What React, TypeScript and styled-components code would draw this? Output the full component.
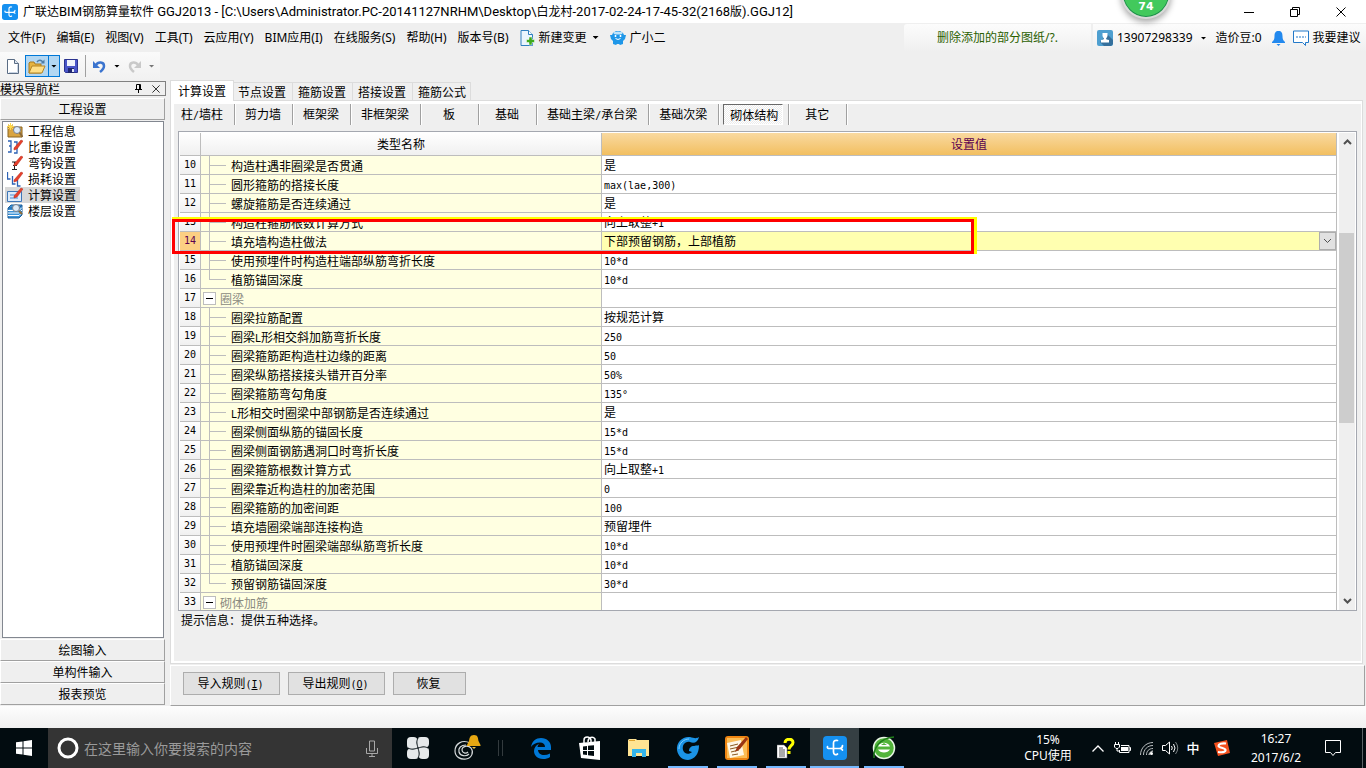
import React from "react";
import styled, { createGlobalStyle, css } from "styled-components";

const line = "#bdbdbd";
const face = "#efefef";
const edge = "#a0a0a0";

const GlobalStyle = createGlobalStyle`
  *, *::before, *::after { box-sizing: border-box; }
  body { margin: 0; background: ${face}; }
  button, input, select {
    font: inherit; color: inherit; background: none; border: 0; padding: 0; margin: 0; border-radius: 0;
  }
  svg { display: block; flex: none; }
`;

const Window = styled.div`
  display: flex;
  flex-direction: column;
  height: 100vh;
  min-height: 480px;
  overflow: hidden;
  background: ${face};
  color: #000;
  font: 12px/16px "Noto Sans", "Noto Sans CJK SC", sans-serif;
  white-space: nowrap;
`;

/* Title bar */
const TitleBar = styled.header`
  position: relative;
  display: flex;
  align-items: center;
  height: 23px;
  padding: 0 2px;
  background: #fff;
`;
const Title = styled.h1`
  flex: 1;
  margin: 0 0 0 5px;
  font-size: 12px;
  font-weight: 400;
`;
const TitleLatin = styled.span`
  font: 13px/16px Roboto, sans-serif;
`;
const CaptionButton = styled.button`
  display: flex;
  align-items: center;
  justify-content: center;
  width: 46px;
  height: 22px;
`;
const ScoreBall = styled.div`
  position: absolute;
  right: 195px;
  top: -31px;
  z-index: 2;
  display: flex;
  align-items: flex-end;
  justify-content: center;
  width: 50px;
  height: 50px;
  padding-bottom: 2px;
  border: 2px solid #d9d9d9;
  border-radius: 50%;
  box-shadow: inset 0 0 0 1px #1e8a4c, 0 3px 6px rgba(0, 0, 0, 0.35);
  background: #42c95c;
  color: #fff;
  font: bold 11px/16px "DejaVu Sans", sans-serif;
`;

/* Menu bar */
const MenuBar = styled.nav`
  display: flex;
  align-items: stretch;
  height: 29px;
  padding-left: 8px;
`;
const MenuItem = styled.button`
  display: flex;
  align-items: center;
  gap: 4px;
  margin-right: 11px;
`;
const Notice = styled.a`
  display: flex;
  align-items: center;
  justify-content: center;
  width: 187px;
  margin: 1px 2px 0 auto;
  border-radius: 3px 0 0 0;
  background: linear-gradient(#fcfcfc, ${face});
  color: #2a6000;
  text-decoration: none;
`;
const Account = styled.div`
  display: flex;
  align-items: center;
  width: 273px;
  margin-top: 1px;
  padding-left: 4px;
  background: linear-gradient(#fcfcfc, ${face});
`;
const AccountButton = styled.button<{ $after: number }>`
  display: flex;
  align-items: center;
  gap: 4px;
  margin-right: ${(p) => p.$after}px;
`;
const Caret = styled.i<{ $dim?: boolean; $before?: number }>`
  width: 6px;
  height: 3px;
  margin-left: ${(p) => p.$before ?? 0}px;
  background: ${(p) => (p.$dim ? "#777" : "#000")};
  clip-path: polygon(0 0, 100% 0, 50% 100%);
`;

/* Toolbar */
const ToolBar = styled.div`
  display: flex;
  align-items: center;
  align-self: flex-start;
  width: 160px;
  height: 28px;
  padding-left: 6px;
  background: linear-gradient(#fafafa, #f1f1f1);
`;
const ToolButton = styled.button<{ $w: number }>`
  display: flex;
  align-items: center;
  justify-content: center;
  width: ${(p) => p.$w}px;
  height: 22px;
`;
const OpenSplit = styled.div`
  display: flex;
  margin: 0 3px 0 5px;
  border: 1px solid #0078d7;
  background: #b3d7f2;
  ${ToolButton} { height: 20px; }
  ${ToolButton} + ${ToolButton} { border-left: 1px solid #0078d7; }
`;
const ToolDivider = styled.i`
  width: 1px;
  height: 22px;
  margin: 0 5px 0 6px;
  background: ${edge};
`;

/* Body */
const Body = styled.div`
  display: flex;
  flex: 1;
  min-height: 0;
  font: 12px/16px "Noto Sans CJK SC", sans-serif;
`;
const Sidebar = styled.aside`
  display: flex;
  flex-direction: column;
  width: 166px;
  margin-right: 4px;
  padding: 1px 0;
`;
const SideHeader = styled.div`
  display: flex;
  align-items: center;
  height: 15px;
  margin-bottom: 2px;
  border: 1px solid #808080;
  border-left: 0;
`;
const SideTitle = styled.h2`
  flex: 1;
  margin: 0;
  font-size: 12px;
  font-weight: 400;
  line-height: 13px;
`;
const SideIcon = styled.button`
  display: flex;
  justify-content: center;
  width: 18px;
`;
const SideButton = styled.button`
  height: 22px;
  margin-right: 1px;
  border: solid;
  border-width: 1px;
  border-color: #fff ${edge} ${edge} #fff;
  text-align: center;
  line-height: 18px;
`;
const SideList = styled.ul`
  flex: 1;
  margin: 1px 2px 1px 2px;
  padding: 1px 2px;
  border: 1px solid #828790;
  background: #fff;
  list-style: none;
`;
const SideItem = styled.button<{ $on?: boolean }>`
  display: flex;
  align-items: center;
  gap: 5px;
  height: 16px;
  padding: 0 4px 0 2px;
  background: ${(p) => (p.$on ? "#d8d8d8" : "none")};
`;

const Main = styled.main`
  display: flex;
  flex: 1;
  flex-direction: column;
  min-width: 0;
  padding-right: 1px;
`;
const Tabs = styled.div`
  display: flex;
  align-items: flex-end;
  height: 20px;
`;
const Tab = styled.button<{ $on?: boolean }>`
  height: 18px;
  padding: 1px 6px 0 5px;
  border: 1px solid #dcdcdc;
  border-width: 1px 1px 0 0;
  &:last-child { padding-right: 4px; }
  ${(p) =>
    p.$on &&
    css`
      z-index: 1;
      height: 21px;
      margin: 0 -1px -1px 0;
      padding: 0 7px 1px;
      border-left-width: 1px;
      background: #fff;
    `}
`;
const Pane = styled.section`
  display: flex;
  flex: 1;
  flex-direction: column;
  min-height: 0;
  margin-right: 2px;
  border: 1px solid #dcdcdc;
  background: #fff;
  padding: 3px 1px 2px 3px;
`;
const PaneInner = styled.div`
  display: flex;
  flex: 1;
  flex-direction: column;
  min-height: 0;
  background: ${face};
`;
const Kinds = styled.div`
  display: flex;
  height: 21px;
  margin-bottom: 6px;
`;
const KindSlot = styled.div`
  display: flex;
  justify-content: center;
  min-width: 58px;
  padding: 0 11px 0 10px;
  border-right: 1px solid ${edge};
  box-shadow: 1px 0 #fff;
  &:first-child { padding-left: 7px; }
`;
const Kind = styled.button<{ $on?: boolean }>`
  padding-bottom: 2px;
  line-height: 19px;
  ${(p) =>
    p.$on &&
    css`
      margin: 0 -6px;
      padding: 0 4px 0 6px;
      border: 1px solid;
      border-color: #696969 #fff #fff #696969;
      background: repeating-conic-gradient(#fff 0 25%, #ececec 0 50%) 0 0 / 2px 2px;
    `}
`;

/* Grid */
const GridArea = styled.div`
  position: relative;
  display: flex;
  flex: 1;
  min-height: 0;
  margin: 0 4px;
`;
const GridFrame = styled.div`
  display: flex;
  flex: 1;
  gap: 2px;
  padding: 1px 1px 0 1px;
  overflow: hidden;
  border: 1px solid #a5a8b0;
  background: #fff;
`;
const GridClip = styled.div`
  flex: 1;
  overflow: hidden;
`;
const Grid = styled.table`
  width: 100%;
  table-layout: fixed;
  border-collapse: separate;
  border-spacing: 0;
`;
const NumCol = styled.col`width: 21px;`;
const NameCol = styled.col`width: 401px;`;
const HeadCell = styled.th<{ $on?: boolean }>`
  height: 23px;
  padding: 0;
  border: solid ${line};
  border-width: 0 1px 1px 0;
  background: ${(p) => (p.$on ? "linear-gradient(#f9d9a0, #f2bf60)" : "linear-gradient(#fff, #f0f0f0)")};
  color: ${(p) => (p.$on ? "#5a0050" : "#000")};
  font-weight: 400;
`;
const Cell = styled.td<{ $tone?: "name" | "active" }>`
  height: 19px;
  padding: 0 0 0 2px;
  border: solid ${line};
  border-width: 0 1px 1px 0;
  background: ${(p) => (p.$tone === "name" ? "#ffffe1" : p.$tone === "active" ? "#ffffb0" : "#fff")};
  line-height: 16px;
`;
const NumCell = styled.th<{ $on?: boolean }>`
  height: 19px;
  padding: 0;
  border: solid ${line};
  border-width: 0 1px 1px 0;
  background: ${(p) => (p.$on ? "#fccf83" : "linear-gradient(#fff, #f0f0f0)")};
  color: ${(p) => (p.$on ? "#5a0050" : "#000")};
  font: 10px/16px "DejaVu Sans Mono", monospace;
`;
const Latin = styled.span`
  font: 10px/10px "DejaVu Sans Mono", monospace;
`;
const NameLine = styled.div<{ $group?: boolean }>`
  display: flex;
  align-items: center;
  height: 18px;
  color: ${(p) => (p.$group ? "#8a8a80" : "#000")};
`;
const NameText = styled.span`
  padding-top: 2px;
`;
const Branch = styled.i<{ $last?: boolean }>`
  position: relative;
  width: 17px;
  height: 19px;
  margin: 0 5px -1px 6px;
  &::before {
    content: "";
    position: absolute;
    left: 0;
    top: 0;
    width: 1px;
    height: ${(p) => (p.$last ? 10 : 19)}px;
    background: ${line};
  }
  &::after {
    content: "";
    position: absolute;
    left: 0;
    top: 9px;
    width: 17px;
    height: 1px;
    background: ${line};
  }
`;
const Fold = styled.button`
  display: flex;
  align-items: center;
  justify-content: center;
  width: 13px;
  height: 13px;
  margin-right: 4px;
  border: 1px solid ${line};
  background: #fff;
  color: #000;
`;
const PickCell = styled.div`
  display: flex;
  align-items: center;
  height: 18px;
`;
const Pick = styled.select`
  flex: 1;
  height: 16px;
  appearance: none;
  line-height: 16px;
`;
const PickArrow = styled.span`
  display: flex;
  align-items: center;
  justify-content: center;
  width: 17px;
  height: 18px;
  border: 1px solid #adadad;
  background: #e1e1e1;
`;
const Scroll = styled.div`
  display: flex;
  flex-direction: column;
  width: 16px;
  background: ${face};
`;
const ScrollButton = styled.button`
  display: flex;
  align-items: center;
  justify-content: center;
  height: 18px;
`;
const Track = styled.div<{ $share: number; $thumb?: boolean }>`
  flex: ${(p) => p.$share};
  margin-right: 1px;
  background: ${(p) => (p.$thumb ? "#cdcdcd" : "none")};
`;
const Marker = styled.div`
  position: absolute;
  left: -6px;
  top: 86px;
  width: 805px;
  height: 37px;
  border: solid #ff0;
  border-width: 2px 3px 0 0;
  pointer-events: none;
  &::before {
    content: "";
    display: block;
    height: 100%;
    border: 3px solid #f00;
  }
`;
const Hint = styled.p`
  height: 50px;
  margin: 0;
  padding: 1px 7px;
`;
const Actions = styled.div`
  display: flex;
  gap: 8px;
  margin-top: 1px;
  height: 41px;
  padding: 6px 12px;
  border: solid;
  border-width: 1px;
  border-color: #fff ${edge} ${edge} #fff;
`;
const ActionButton = styled.button<{ $w: number }>`
  width: ${(p) => p.$w}px;
  height: 23px;
  padding: 0 2px 2px 0;
  border: 1px solid #adadad;
  background: #e1e1e1;
  line-height: 19px;
`;
const StatusBar = styled.div`
  height: 22px;
  background: linear-gradient(#fdfdfd, #f0f0f0);
`;

/* Taskbar */
const TaskBar = styled.footer`
  display: flex;
  height: 40px;
  background: #020c10;
  color: #fff;
`;
const StartButton = styled.button`
  display: flex;
  align-items: center;
  justify-content: center;
  width: 48px;
`;
const Search = styled.label`
  display: flex;
  align-items: center;
  width: 344px;
  margin-right: 1px;
  padding: 0 13px 0 9px;
  background: #343434;
  input {
    flex: 1;
    margin-left: 5px;
    outline: 0;
    font: 14px/20px "Noto Sans CJK SC", sans-serif;
  }
  input::placeholder { color: #9a9a9a; opacity: 1; }
`;
const TaskItem = styled.button<{ $state?: "open" | "active" }>`
  display: flex;
  align-items: center;
  justify-content: center;
  width: 49px;
  ${(p) =>
    p.$state &&
    css`
      background: linear-gradient(#76b9ff, #76b9ff) center bottom / ${p.$state === "active" ? "49px" : "40px"} 2px
        no-repeat ${p.$state === "active" ? "#353f43" : "transparent"};
    `}
`;
const TaskGap = styled.i`
  width: 5px;
  height: 16px;
  margin: 12px 13px 0 7px;
  border: solid #333b3e;
  border-width: 0 1px;
`;
const Meter = styled.div`
  width: 68px;
  margin: 4px 4px 0 auto;
  text-align: center;
  line-height: 16px;
`;
const TrayButton = styled.button<{ $w: number }>`
  display: flex;
  align-items: center;
  justify-content: center;
  width: ${(p) => p.$w}px;
  font: 500 13px/16px "Noto Sans CJK SC", sans-serif;
`;
const Clock = styled.time`
  width: 72px;
  padding-top: 1px;
  text-align: center;
  line-height: 19px;
`;
const PeekLine = styled.i`
  width: 4px;
  margin-left: 8px;
  border-left: 1px solid #5a6265;
`;

/* Drawings */
const Whirl = ({ s }: { s: number }) => (
  <svg width={s} height={s} viewBox="0 0 24 24">
    <rect width="24" height="24" rx="4" fill="#1590f0" />
    <path
      d="M14.500 4.500c-2.500-.5-4 .5-4 2.500v9c0 2.500 2 3.500 4 2M4.500 10.500c-.5 1.500.5 2 2 2h10c2 0 3-1 3-3M16.500 12.500c1.500 0 2.500.5 3 1.500"
      fill="none" stroke="#fff" strokeWidth="1.700" strokeLinecap="round"
    />
  </svg>
);
const NewIcon = () => (
  <svg width="12" height="15" viewBox="0 0 12 15">
    <path d="M.5.5h7l4 4v10H.5z" fill="#fff" stroke="#5a6c84" />
    <path d="M7.500.5v4h4" fill="#dce6f2" stroke="#5a6c84" />
    <path d="M10.500 5.500v8H2" fill="none" stroke="#c7d3e3" />
  </svg>
);
const OpenIcon = () => (
  <svg width="18" height="15" viewBox="0 0 18 15">
    <path d="M1 14V4l1-1h4l1 2h6v9z" fill="#e6b440" stroke="#a87a20" />
    <path d="M1 14l3-7h13l-3 7z" fill="#ffdf86" stroke="#b58525" />
    <path d="M9 3c2-2.500 4-2 6 0" fill="none" stroke="#4f7fa8" strokeWidth="1.500" />
    <path d="M16.500.5v4h-4z" fill="#4f7fa8" />
  </svg>
);
const SaveIcon = () => (
  <svg width="14" height="14" viewBox="0 0 14 14">
    <path d="M.5.5h13v13h-12l-1-1z" fill="#4a55c8" stroke="#2b338f" />
    <path d="M3 1h8v6H3z" fill="#f0f3fb" />
    <path d="M4 9h6v5H4z" fill="#1f2670" />
    <path d="M8 10h2v3H8z" fill="#dfe4f5" />
  </svg>
);
const UndoIcon = ({ color, flip }: { color: string; flip?: boolean }) => (
  <svg width="13" height="13" viewBox="0 0 13 13">
    <g transform={flip ? "translate(13 0) scale(-1 1)" : undefined}>
      <path d="M0 1v7h7z" fill={color} />
      <path d="M3 5c2-3.500 8-3.500 8 1 0 2.500-1.500 4-4 6" fill="none" stroke={color} strokeWidth="2.500" />
    </g>
  </svg>
);
const ChangeIcon = () => (
  <svg width="15" height="16" viewBox="0 0 15 16">
    <path d="M1 .5h7.500l4 4v11H1z" fill="#e9f4fd" stroke="#2f7fc0" />
    <path d="M8.500.5v4h4" fill="#fff" stroke="#2f7fc0" />
    <path d="M9 7h3v2.500h2.500v3H12V15H9v-2.500H6.500v-3H9z" fill="#3faa1c" stroke="#fff" strokeWidth=".5" />
  </svg>
);
const RobotIcon = () => (
  <svg width="16" height="15" viewBox="0 0 16 15">
    <path d="M0 5l2 0 1-2 3-2h4l3 2 1 2 2 0-1 4-2 2v3l-3 1-1-1H7l-1 1-3-1v-3L1 9z" fill="#1f97e8" />
    <ellipse cx="8" cy="3" rx="4.500" ry="1.500" fill="#bfe4fb" />
    <path d="M5.500 5v2M10.500 5v2" stroke="#fff" strokeWidth="1.500" />
    <path d="M5.500 8.500q2.500 2 5 0" stroke="#fff" fill="none" />
  </svg>
);
const UserIcon = () => (
  <svg width="16" height="16" viewBox="0 0 16 16">
    <rect width="16" height="16" rx="2" fill="#4e9fd0" />
    <path d="M10 4l6 6v4l-2 2H7l-4-4z" fill="#35709c" />
    <path d="M5.500 3h5v3l-1 2h-3l-1-2zM7 8h2l.5 1.500L12 10v2.500H4V10l2.500-.5z" fill="#fff" />
  </svg>
);
const BellIcon = () => (
  <svg width="13" height="15" viewBox="0 0 13 15">
    <path d="M6.500 0c3 0 4 2 4 5s.5 4 2.500 6v1H0v-1c2-2 2.500-3 2.500-6s1-5 4-5z" fill="#2389ee" />
    <path d="M4.500 13h4l-2 2z" fill="#2389ee" />
  </svg>
);
const ChatIcon = () => (
  <svg width="16" height="16" viewBox="0 0 16 16">
    <path d="M.5 1h15v11.500h-3v3l-3-3h-9z" fill="#fff" stroke="#2379c9" />
    <path d="M3 7h2M6 7h2M9 7h2M12 7h1" stroke="#2379c9" />
  </svg>
);
const PinIcon = () => (
  <svg width="9" height="9" viewBox="0 0 9 9">
    <path d="M2.500 5V.5h4V5M1 5.500h7M4.500 5.500V9M5.500 1v4" fill="none" stroke="#000" />
  </svg>
);
const Cross = ({ s }: { s: number }) => (
  <svg width={s} height={s} viewBox="0 0 10 10">
    <path d="M.5.5l9 9M9.500.5l-9 9" stroke="#000" fill="none" />
  </svg>
);
const Chevron = ({ up, color = "#505050", w = 2 }: { up?: boolean; color?: string; w?: number }) => (
  <svg width="9" height="6" viewBox="0 0 9 6">
    <path d={up ? "M1 5l3.500-3.500L8 5" : "M1 1l3.500 3.500L8 1"} fill="none" stroke={color} strokeWidth={w} />
  </svg>
);
const Pen = () => <path d="M7 9l7-8 2 1-6 8-3 1z" fill="#e8402c" stroke="#b02818" strokeWidth=".5" />;
const Magnifier = () => (
  <>
    <circle cx="10" cy="7" r="3.500" fill="#dceaf8" stroke="#7a7f8a" />
    <path d="M12.500 9.500L15.500 14" stroke="#8a6a3a" strokeWidth="2" />
  </>
);
const sideArt: Record<string, React.ReactNode> = {
  info: (
    <>
      <path d="M1 3h5l1 1h8v10H1z" fill="#d9a441" stroke="#8a6420" />
      <path d="M3.500 0v7M0 3.500h7M1 1l5 5M6 1L1 6" stroke="#ffd84a" />
      <Magnifier />
    </>
  ),
  weight: (
    <>
      <path d="M1 2h3v11H1M7 3h3v11H7M4 7H2" fill="none" stroke="#2d62b5" strokeWidth="1.300" />
      <Pen />
    </>
  ),
  hook: (
    <>
      <path d="M5 7h4M7.500 7v7M5 14.500h5M6 10.500h4" stroke="#222" fill="none" />
      <Pen />
    </>
  ),
  loss: (
    <>
      <path d="M.5 1v7h3M5.500 5v8h3M10.500 9v6h3" stroke="#2d62b5" fill="none" strokeWidth="1.300" />
      <Pen />
    </>
  ),
  calc: (
    <>
      <path d="M.5 4.500h14v10H.5z" fill="#dcebfb" stroke="#3e77b8" />
      <path d="M3 8h5M3 11h8" stroke="#4f8ad0" />
      <Pen />
    </>
  ),
  floor: (
    <>
      <path d="M1 5l3-3h11l-3 3zM1 5v10h11l3-3V2l-3 3" fill="#3b92d8" stroke="#1e609c" />
      <path d="M1 7.500h11l3-3M1 10h11l3-3M1 12.500h11l3-3" fill="none" stroke="#fff" />
      <circle cx="9" cy="5" r="3.500" fill="#dceaf8" stroke="#7a7f8a" />
      <path d="M12 8l3 3" stroke="#8a6a3a" strokeWidth="2" />
    </>
  ),
};

const split = (text: string, Wrap: React.ElementType) =>
  text.split(/([\x21-\x7e°]+(?: [\x21-\x7e]+)*)/).map((part, i) => (i % 2 ? <Wrap key={i}>{part}</Wrap> : part));
const mixed = (text: string) => split(text, Latin);

const titleText =
  "广联达BIM钢筋算量软件 GGJ2013 - [C:\\Users\\Administrator.PC-20141127NRHM\\Desktop\\白龙村-2017-02-24-17-45-32(2168版).GGJ12]";
const menus = ["文件(F)", "编辑(E)", "视图(V)", "工具(T)", "云应用(Y)", "BIM应用(I)", "在线服务(S)", "帮助(H)", "版本号(B)"];
const sideItems: [string, string][] = [
  ["info", "工程信息"],
  ["weight", "比重设置"],
  ["hook", "弯钩设置"],
  ["loss", "损耗设置"],
  ["calc", "计算设置"],
  ["floor", "楼层设置"],
];
const tabs = ["计算设置", "节点设置", "箍筋设置", "搭接设置", "箍筋公式"];
const kinds = ["柱/墙柱", "剪力墙", "框架梁", "非框架梁", "板", "基础", "基础主梁/承台梁", "基础次梁", "砌体结构", "其它"];

type Row = { n: number; name: string; value?: string; kind?: "group" | "last" };
const rows: Row[] = [
  { n: 10, name: "构造柱遇非圈梁是否贯通", value: "是" },
  { n: 11, name: "圆形箍筋的搭接长度", value: "max(lae,300)" },
  { n: 12, name: "螺旋箍筋是否连续通过", value: "是" },
  { n: 13, name: "构造柱箍筋根数计算方式", value: "向上取整+1" },
  { n: 14, name: "填充墙构造柱做法", value: "下部预留钢筋，上部植筋" },
  { n: 15, name: "使用预埋件时构造柱端部纵筋弯折长度", value: "10*d" },
  { n: 16, name: "植筋锚固深度", value: "10*d", kind: "last" },
  { n: 17, name: "圈梁", kind: "group" },
  { n: 18, name: "圈梁拉筋配置", value: "按规范计算" },
  { n: 19, name: "圈梁L形相交斜加筋弯折长度", value: "250" },
  { n: 20, name: "圈梁箍筋距构造柱边缘的距离", value: "50" },
  { n: 21, name: "圈梁纵筋搭接接头错开百分率", value: "50%" },
  { n: 22, name: "圈梁箍筋弯勾角度", value: "135°" },
  { n: 23, name: "L形相交时圈梁中部钢筋是否连续通过", value: "是" },
  { n: 24, name: "圈梁侧面纵筋的锚固长度", value: "15*d" },
  { n: 25, name: "圈梁侧面钢筋遇洞口时弯折长度", value: "15*d" },
  { n: 26, name: "圈梁箍筋根数计算方式", value: "向上取整+1" },
  { n: 27, name: "圈梁靠近构造柱的加密范围", value: "0" },
  { n: 28, name: "圈梁箍筋的加密间距", value: "100" },
  { n: 29, name: "填充墙圈梁端部连接构造", value: "预留埋件" },
  { n: 30, name: "使用预埋件时圈梁端部纵筋弯折长度", value: "10*d" },
  { n: 31, name: "植筋锚固深度", value: "10*d" },
  { n: 32, name: "预留钢筋锚固深度", value: "30*d", kind: "last" },
  { n: 33, name: "砌体加筋", kind: "group" },
];

const GridRow = ({ row }: { row: Row }) => {
  const active = row.n === 14;
  const group = row.kind === "group";
  return (
    <tr>
      <NumCell scope="row" $on={active}>{row.n}</NumCell>
      <Cell $tone="name">
        <NameLine $group={group}>
          {group ? (
            <Fold aria-label="折叠">
              <svg width="7" height="1"><path d="M0 .5h7" stroke="#000" /></svg>
            </Fold>
          ) : (
            <Branch $last={row.kind === "last"} />
          )}
          <NameText>{mixed(row.name)}</NameText>
        </NameLine>
      </Cell>
      <Cell $tone={active ? "active" : undefined}>
        {active ? (
          <PickCell>
            <Pick aria-label={row.name}>
              <option>{row.value}</option>
            </Pick>
            <PickArrow><Chevron w={1} /></PickArrow>
          </PickCell>
        ) : (
          mixed(row.value ?? "")
        )}
      </Cell>
    </tr>
  );
};

const taskIcons: { label: string; state?: "open" | "active"; art: React.ReactNode }[] = [
  {
    label: "Edge",
    art: (
      <svg width="20" height="21" viewBox="0 0 20 21">
        <path d="M0 9C1 3 5 0 10 0c6 0 10 4 10 9v3H7c0 3 3 5 6 5 2 0 4-.5 6-1.500V19c-2 1.500-4 2-7 2-6 0-9-4-9-8 0-3 2-6 5-7-1 1-1.500 2-1.500 3H14c0-3-2-4.500-5-4.500C5 4.500 2 6 0 9z" fill="#0078d7" />
      </svg>
    ),
  },
  {
    label: "商店",
    art: (
      <svg width="22" height="24" viewBox="0 0 22 24">
        <path d="M5 7V4c0-4 6-4 7 0v2M9 6c0-5 5-6 7-3v3" fill="none" stroke="#fff" strokeWidth="1.500" />
        <path d="M0 7l21-2v19L2 22z" fill="#fff" />
        <path d="M4 10.500l4-.5v4H4zM9 9.800l6-.6V14H9zM4 15h4v4l-4-.5zM9 15h6v5l-6-.7z" fill="#020c10" />
      </svg>
    ),
  },
  {
    label: "文件资源管理器",
    art: (
      <svg width="22" height="18" viewBox="0 0 22 18">
        <path d="M0 1l1-1h7l1 1h12v16H0z" fill="#ffe493" />
        <path d="M1 1h6v1H1z" fill="#e0a32e" />
        <path d="M4 18v-8h14v8h-4v-4H8v4z" fill="#35b5ea" />
      </svg>
    ),
  },
  {
    label: "浏览器",
    state: "open",
    art: (
      <svg width="24" height="24" viewBox="0 0 24 24">
        <path d="M1 14C0 6 7 0 14 1c4 1 6 2 9 0-1 5-5 7-9 5-5-1-8 3-7 8 1 4 6 5 9 2l-3-1c0-3 2-5 5-5 3-1 4 0 5-1 0 9-4 14-11 15C6 24 2 20 1 14z" fill="#1b93e6" />
        <path d="M3 13C3 7 8 3 13 3" fill="none" stroke="#7ed0ff" />
      </svg>
    ),
  },
  {
    label: "记事",
    state: "open",
    art: (
      <svg width="24" height="24" viewBox="0 0 24 24">
        <rect width="24" height="24" rx="3" fill="#ee8512" />
        <rect x="2" y="2" width="20" height="20" fill="#fbbd55" />
        <path d="M2 7l14-3 3 15-14 3z" fill="#fff8e8" />
        <path d="M5 10l8-2M5 13l9-2M6 16l8-2M7 19l6-1" stroke="#8a5a20" />
        <path d="M10 16l2-5L21 1l2 2-8 10z" fill="#9a3412" />
      </svg>
    ),
  },
  {
    label: "帮助",
    state: "open",
    art: (
      <svg width="18" height="21" viewBox="0 0 18 21">
        <path d="M0 7h7l3 3v10H0z" fill="#fff" stroke="#777" strokeWidth=".5" />
        <path d="M2 10h4M2 12h6M2 14h6M2 16h6M2 18h6" stroke="#555" />
        <path d="M8 5c0-5 8-5 8-.5 0 3-4 3.500-4 7" fill="none" stroke="#ff0" strokeWidth="3" />
        <path d="M10.500 13h3v3h-3z" fill="#ff0" />
      </svg>
    ),
  },
  { label: "广联达", state: "active", art: <Whirl s={24} /> },
  {
    label: "安全浏览器",
    state: "open",
    art: (
      <svg width="24" height="24" viewBox="0 0 24 24">
        <circle cx="12" cy="12" r="10.500" fill="#52b43a" stroke="#e8f6e4" strokeWidth="1.500" />
        <path d="M6 10.500c2-5 10-5 12 0zM6 13.500h12c-2 4-10 4-12 0z" fill="#fff" />
        <path d="M9 9l3-2 3 2z" fill="#52b43a" />
        <path d="M2 22C1 12 8 2 22 1" fill="none" stroke="#1f7d1a" strokeWidth="1.500" />
      </svg>
    ),
  },
];

export default function App() {
  return (
    <Window>
      <GlobalStyle />
      <TitleBar>
        <Whirl s={16} />
        <Title>{split(titleText, TitleLatin)}</Title>
        <CaptionButton aria-label="最小化">
          <svg width="10" height="10"><path d="M0 5.500h10" stroke="#000" /></svg>
        </CaptionButton>
        <CaptionButton aria-label="还原">
          <svg width="10" height="10"><path d="M.5 2.500h7v7h-7zM2.500 2.500v-2h7v7h-2" fill="none" stroke="#000" /></svg>
        </CaptionButton>
        <CaptionButton aria-label="关闭"><Cross s={10} /></CaptionButton>
        <ScoreBall>74</ScoreBall>
      </TitleBar>

      <MenuBar>
        {menus.map((m) => <MenuItem key={m}>{m}</MenuItem>)}
        <MenuItem><ChangeIcon />新建变更<Caret $before={2} /></MenuItem>
        <MenuItem><RobotIcon />广小二</MenuItem>
        <Notice href="#notice">删除添加的部分图纸/?.</Notice>
        <Account>
          <AccountButton $after={9}><UserIcon />13907298339<Caret $before={4} /></AccountButton>
          <AccountButton $after={10}>造价豆:0</AccountButton>
          <AccountButton $after={8} aria-label="消息"><BellIcon /></AccountButton>
          <AccountButton $after={0}><ChatIcon />我要建议</AccountButton>
        </Account>
      </MenuBar>

      <ToolBar>
        <ToolButton $w={14} aria-label="新建"><NewIcon /></ToolButton>
        <OpenSplit>
          <ToolButton $w={22} aria-label="打开"><OpenIcon /></ToolButton>
          <ToolButton $w={11} aria-label="打开选项"><Caret /></ToolButton>
        </OpenSplit>
        <ToolButton $w={16} aria-label="保存"><SaveIcon /></ToolButton>
        <ToolDivider />
        <ToolButton $w={18} aria-label="撤销"><UndoIcon color="#3b74cf" /></ToolButton>
        <ToolButton $w={17} aria-label="撤销选项"><Caret /></ToolButton>
        <ToolButton $w={18} aria-label="恢复"><UndoIcon color="#c9c9c9" flip /></ToolButton>
        <ToolButton $w={17} aria-label="恢复选项"><Caret $dim /></ToolButton>
      </ToolBar>

      <Body>
        <Sidebar>
          <SideHeader>
            <SideTitle>模块导航栏</SideTitle>
            <SideIcon aria-label="固定"><PinIcon /></SideIcon>
            <SideIcon aria-label="关闭"><Cross s={8} /></SideIcon>
          </SideHeader>
          <SideButton>工程设置</SideButton>
          <SideList>
            {sideItems.map(([art, label]) => (
              <li key={label}>
                <SideItem $on={label === "计算设置"}>
                  <svg width="16" height="16" viewBox="0 0 16 16">{sideArt[art]}</svg>
                  {label}
                </SideItem>
              </li>
            ))}
          </SideList>
          <SideButton>绘图输入</SideButton>
          <SideButton>单构件输入</SideButton>
          <SideButton>报表预览</SideButton>
        </Sidebar>

        <Main>
          <Tabs role="tablist">
            {tabs.map((t, i) => <Tab key={t} role="tab" aria-selected={i === 0} $on={i === 0}>{t}</Tab>)}
          </Tabs>
          <Pane>
            <PaneInner>
              <Kinds>
                {kinds.map((k) => (
                  <KindSlot key={k}>
                    <Kind $on={k === "砌体结构"}>{mixed(k)}</Kind>
                  </KindSlot>
                ))}
              </Kinds>
              <GridArea>
                <GridFrame>
                  <GridClip>
                    <Grid>
                      <colgroup><NumCol /><NameCol /><col /></colgroup>
                      <thead>
                        <tr>
                          <HeadCell aria-label="序号" />
                          <HeadCell scope="col">类型名称</HeadCell>
                          <HeadCell scope="col" $on>设置值</HeadCell>
                        </tr>
                      </thead>
                      <tbody>{rows.map((r) => <GridRow key={r.n} row={r} />)}</tbody>
                    </Grid>
                  </GridClip>
                  <Scroll>
                    <ScrollButton aria-label="向上滚动"><Chevron up /></ScrollButton>
                    <Track $share={82} />
                    <Track $share={190} $thumb />
                    <Track $share={169} />
                    <ScrollButton aria-label="向下滚动"><Chevron /></ScrollButton>
                  </Scroll>
                </GridFrame>
                <Marker />
              </GridArea>
              <Hint>提示信息：提供五种选择。</Hint>
            </PaneInner>
          </Pane>
          <Actions>
            <ActionButton $w={97}>导入规则<Latin>(<u>I</u>)</Latin></ActionButton>
            <ActionButton $w={97}>导出规则<Latin>(<u>O</u>)</Latin></ActionButton>
            <ActionButton $w={73}>恢复</ActionButton>
          </Actions>
        </Main>
      </Body>
      <StatusBar />

      <TaskBar>
        <StartButton aria-label="开始">
          <svg width="16" height="16" viewBox="0 0 16 16">
            <path d="M0 2.300L6.500 1.400v6.100H0zM7.500 1.200L16 0v7.500H7.500zM0 8.500h6.500v6.100L0 13.700zM7.500 8.500H16V16l-8.500-1.200z" fill="#fff" />
          </svg>
        </StartButton>
        <Search>
          <svg width="22" height="22"><circle cx="11" cy="11" r="9" fill="none" stroke="#fff" strokeWidth="3" /></svg>
          <input type="text" placeholder="在这里输入你要搜索的内容" aria-label="搜索" />
          <svg width="14" height="17" viewBox="0 0 14 17">
            <path d="M4.500 1h5v10h-5zM1.500 8v5.500h11V8M7 13.500V16M4 16.500h6" fill="none" stroke="#a8a8a8" />
          </svg>
        </Search>
        <TaskItem aria-label="应用">
          <svg width="22" height="22" viewBox="0 0 22 22">
            <g fill="#e6e9ea">
              <rect x="0" y="0" width="10.500" height="12" rx="4" />
              <rect x="10" y="0" width="12" height="10.500" rx="4" />
              <rect x="11.500" y="10" width="10.500" height="12" rx="4" />
              <rect x="0" y="11.500" width="12" height="10.500" rx="4" />
              <path d="M7 7h8v8H7z" />
            </g>
            <path
              d="M11 11C10 7 9 5 11 1M11 11c4-1 6-2 10 0M11 11c1 4 2 6 0 10M11 11c-4 1-6 2-10 0"
              fill="none" stroke="#020c10" strokeWidth="1"
            />
          </svg>
        </TaskItem>
        <TaskItem aria-label="提醒">
          <svg width="28" height="26" viewBox="0 0 28 26">
            <g fill="none" stroke="#d5d9da" strokeWidth="1.200">
              <path d="M17 8C9 4 2 9 2 16c0 6 6 9 11 8 6-1 8-7 5-11-3-3-9-2-9 2 0 3 4 4 6 2" />
              <path d="M13 10c-5 0-8 3-7 7 1 4 7 5 10 2" />
            </g>
            <path d="M21 0c4 0 4 3 4.500 6l2 4v1H14v-1l2-4c.5-3 1-6 5-6z" fill="#e8a812" />
            <path d="M19 12h4l-2 2z" fill="#f5c84c" />
          </svg>
        </TaskItem>
        <TaskGap />
        {taskIcons.map((t) => (
          <TaskItem key={t.label} aria-label={t.label} $state={t.state}>{t.art}</TaskItem>
        ))}
        <Meter>15%<br />CPU使用</Meter>
        <TrayButton $w={24} aria-label="显示隐藏的图标">
          <svg width="12" height="7"><path d="M.5 6.500L6 1l5.500 5.500" fill="none" stroke="#fff" strokeWidth="1.300" /></svg>
        </TrayButton>
        <TrayButton $w={24} aria-label="电源">
          <svg width="17" height="12" viewBox="0 0 17 12">
            <path d="M1.500 0v2M4.500 0v2M.5 2.500h5V5l-1.500 1.500H2L.5 5zM3 6v3h2" fill="none" stroke="#fff" />
            <path d="M7 3.500h8v7H5.500V8M15.500 5.500h1v3h-1" fill="none" stroke="#fff" />
            <path d="M7 5h7v4H7z" fill="#fff" />
          </svg>
        </TrayButton>
        <TrayButton $w={24} aria-label="网络">
          <svg width="13" height="13" viewBox="0 0 13 13">
            <g fill="none" stroke="#b9bec0">
              <path d="M.5 13C.5 6 6 .5 13 .5M3.500 13c0-5.500 4-9.500 9.500-9.500M6.500 13c0-4 2.500-6.500 6.500-6.500" />
            </g>
            <path d="M9 13c0-2 2-4 4-4" fill="none" stroke="#fff" />
            <circle cx="11.500" cy="11.500" r="1.500" fill="#fff" />
          </svg>
        </TrayButton>
        <TrayButton $w={24} aria-label="音量">
          <svg width="17" height="14" viewBox="0 0 17 14">
            <path d="M.5 4.500h3l4-3.500v12l-4-3.500h-3zM9.500 5q1.500 2 0 4M11.500 3q3 4 0 8" fill="none" stroke="#fff" />
            <path d="M13.500 1q4.500 6 0 12" fill="none" stroke="#7d8486" />
          </svg>
        </TrayButton>
        <TrayButton $w={22}>中</TrayButton>
        <TrayButton $w={36} aria-label="输入法">
          <svg width="16" height="16" viewBox="0 0 16 16">
            <path d="M0 3L13 0l3 13-12 3z" fill="#f4511e" />
            <path d="M12 3.500C8 3 4.500 4 4.500 6s7 1.500 7 4-4 2.500-7.500 2" fill="none" stroke="#fff" strokeWidth="2.200" />
          </svg>
        </TrayButton>
        <Clock>16:27<br />2017/6/2</Clock>
        <TrayButton $w={42} aria-label="操作中心">
          <svg width="16" height="16" viewBox="0 0 16 16">
            <path d="M.5.5h15v12h-5l-2.500 3-2.500-3h-5z" fill="none" stroke="#fff" />
          </svg>
        </TrayButton>
        <PeekLine />
      </TaskBar>
    </Window>
  );
}
